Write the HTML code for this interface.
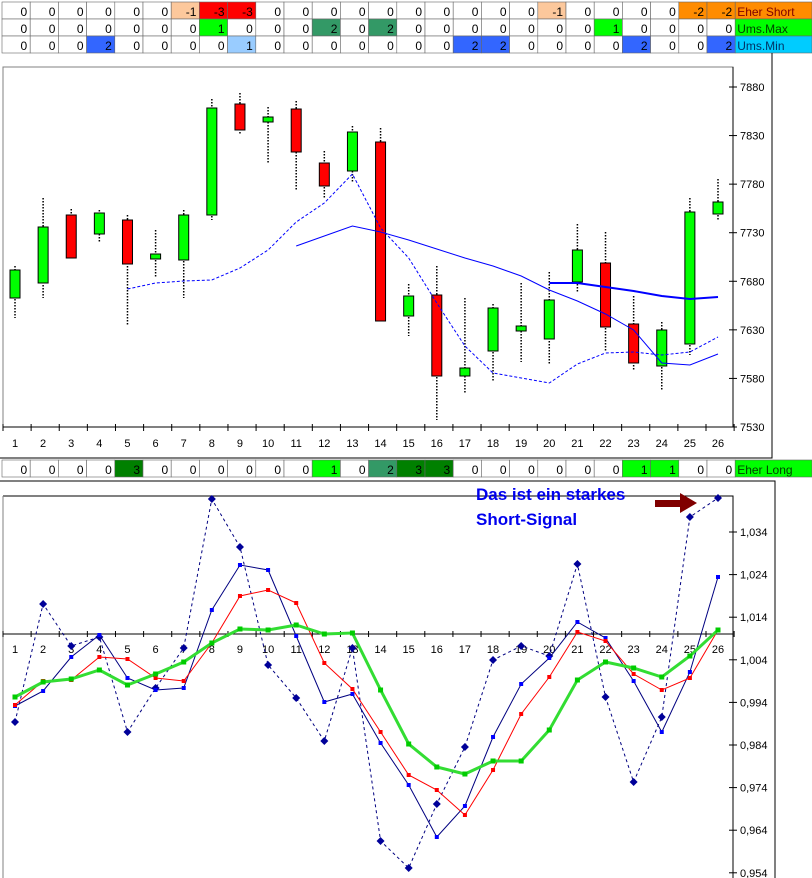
<!DOCTYPE html><html><head><meta charset="utf-8"><style>
body{margin:0;width:812px;height:878px;background:#fff;overflow:hidden;font-family:"Liberation Sans",Arial,sans-serif}
svg{position:absolute;left:0;top:0}
</style></head><body>
<svg id="s" width="812" height="878" xmlns="http://www.w3.org/2000/svg" font-family="Liberation Sans, Arial, sans-serif"></svg>
<script>
var o=[];function a(x){o.push(x)}
var CW=28.2,X0=2;
function row(y,h,vals,cols,label,lbg,lc){
 for(var i=0;i<26;i++){var x=X0+i*CW;a('<rect x="'+x+'" y="'+y+'" width="'+CW+'" height="'+h+'" fill="'+(cols[i]||'#fff')+'" stroke="#666" stroke-width="0.6"/>');
 a('<text x="'+(x+CW-3)+'" y="'+(y+h-3)+'" font-size="12" text-anchor="end" fill="#000">'+vals[i]+'</text>');}
 var lx=X0+26*CW;a('<rect x="'+lx+'" y="'+y+'" width="'+(812-lx)+'" height="'+h+'" fill="'+lbg+'" stroke="#666" stroke-width="0.6"/>');
 a('<text x="'+(lx+2)+'" y="'+(y+h-3)+'" font-size="12" fill="'+lc+'">'+label+'</text>');}
var P='#fcc89c',R='#ff0000',O='#ff8c00',G='#00ff00',SG='#339966',B='#3366ff',LB='#99ccff',DG='#008000';
var v1=[0,0,0,0,0,0,-1,-3,-3,0,0,0,0,0,0,0,0,0,0,-1,0,0,0,0,-2,-2],c1={6:P,7:R,8:R,19:P,24:O,25:O};
var v2=[0,0,0,0,0,0,0,1,0,0,0,2,0,2,0,0,0,0,0,0,0,1,0,0,0,0],c2={7:G,11:SG,13:SG,21:G};
var v3=[0,0,0,2,0,0,0,0,1,0,0,0,0,0,0,0,2,2,0,0,0,0,2,0,0,2],c3={3:B,8:LB,16:B,17:B,22:B,25:B};
row(2,17,v1,c1,'Eher Short',O,'#800000');row(19,17,v2,c2,'Ums.Max',G,'#004000');row(36,17,v3,c3,'Ums.Min','#00ccff','#003366');
var v4=[0,0,0,0,3,0,0,0,0,0,0,1,0,2,3,3,0,0,0,0,0,0,1,1,0,0],c4={4:DG,11:G,13:SG,14:DG,15:DG,22:G,23:G};
row(460,17,v4,c4,'Eher Long',G,'#004000');
function cx(i){return 15+28.12*(i-1)}
// chart1
a('<path d="M772 53V458H0" fill="none" stroke="#000"/>');
a('<path d="M3 67H733V427H3Z" fill="none" stroke="#808080"/>');a('<path d="M3 427H733M733 67V427" stroke="#000" fill="none"/>');
for(var k=0;k<=26;k++){var x=3+28.12*k;a('<path d="M'+x+' 424V431" stroke="#000"/>')}
for(var i=1;i<=26;i++)a('<text x="'+cx(i)+'" y="447" font-size="11" text-anchor="middle">'+i+'</text>');
for(var k=0;k<8;k++){var y=87+k*48.57;a('<path d="M729 '+y+'H737" stroke="#000"/><text x="740" y="'+(y+4)+'" font-size="11">'+(7880-50*k)+'</text>')}
var C=[['g',270,298,266,318],['g',227,283,198,298],['r',215,258,209,260],['g',213,234,210,242],['r',220,264,215,326],['g',254,259,230,277],['g',215,260,210,298],['g',108,215,99,220],['r',104,130,93,134],['g',117,122,107,163],['r',109,152,101,190],['r',163,186,151,199],['g',132,171,126,182],['r',142,321,128,321],['g',296,316,284,336],['r',295,376,266,420],['g',368,376,298,393],['g',308,351,304,382],['g',326,331,283,362],['g',300,339,272,365],['g',250,282,224,292],['r',263,327,232,352],['r',324,363,296,370],['g',330,366,322,390],['g',212,344,198,355],['g',202,214,179,221]];
C.forEach(function(c,j){var x=cx(j+1);a('<path d="M'+x+' '+c[3]+'V'+c[4]+'" stroke="#000" stroke-dasharray="1.5,1.5" stroke-width="1.5"/>');
a('<rect x="'+(x-5)+'" y="'+c[1]+'" width="10" height="'+(c[2]-c[1])+'" fill="'+(c[0]=='g'?'#00ff00':'#ff0000')+'" stroke="#000"/>')});
function line(st,ys,attr){var p='';ys.forEach(function(y,j){p+=(j?'L':'M')+cx(st+j).toFixed(1)+' '+y});a('<path d="'+p+'" fill="none" '+attr+'/>')}
line(5,[289,283,281,280,268,250,222,203,174,228,258,303,346,373,378,383,364,353,352,355,352,337],'stroke="#0000ff" stroke-dasharray="3,2"');
line(11,[246,236,226,232,240,249,258,266,276,290,301,314,330,363,365,354],'stroke="#0000ff"');
line(20,[283,283,287,291,296,299,297],'stroke="#0000ff" stroke-width="2"');
// chart2
a('<path d="M0 481H775V878" fill="none" stroke="#000"/>');
a('<path d="M3 496H733V878" fill="none" stroke="#000"/><path d="M3 496V878" stroke="#808080"/>');
a('<path d="M3 634H733" stroke="#000"/>');
for(var k=0;k<=26;k++){var x=3+28.12*k;a('<path d="M'+x+' 631V637" stroke="#000"/>')}
for(var i=1;i<=26;i++)a('<text x="'+cx(i)+'" y="653" font-size="11" text-anchor="middle">'+i+'</text>');
for(var k=0;k<9;k++){var y=532+k*42.6;a('<path d="M729 '+y+'H737" stroke="#000"/><text x="740" y="'+(y+4)+'" font-size="11">'+(1.034-0.01*k).toFixed(3).replace('.',',')+'</text>')}
function ser(ys,attr,mk){line(1,ys,attr);ys.forEach(function(y,j){var x=cx(j+1);a(mk(x,y))})}
ser([722,604,646,637,732,688,648,499,547,665,698,741,648,841,868,804,747,660,646,656,564,697,782,717,517,498],'stroke="#000080" stroke-dasharray="3,3"',function(x,y){return '<path d="M'+x+' '+(y-4)+'L'+(x+4)+' '+y+'L'+x+' '+(y+4)+'L'+(x-4)+' '+y+'Z" fill="#000099"/>'});
ser([706,691,657,635,678,690,688,610,565,570,636,702,694,743,785,837,806,737,684,658,622,638,681,732,672,577],'stroke="#000080"',function(x,y){return '<rect x="'+(x-2)+'" y="'+(y-2)+'" width="4" height="4" fill="#0000ff"/>'});
ser([705,681,680,657,659,678,681,643,596,590,603,663,689,732,775,790,815,770,714,677,632,641,674,690,678,630],'stroke="#ff0000"',function(x,y){return '<rect x="'+(x-2)+'" y="'+(y-2)+'" width="4" height="4" fill="#ff0000"/>'});
ser([697,682,679,670,685,674,662,643,629,630,625,634,633,690,744,767,774,761,761,730,680,662,668,677,656,630],'stroke="#33dd33" stroke-width="3"',function(x,y){return '<rect x="'+(x-2.5)+'" y="'+(y-2.5)+'" width="5" height="5" fill="#00cc00"/>'});
a('<text x="476" y="500" font-size="17" font-weight="bold" fill="#0000ee">Das ist ein starkes</text><text x="476" y="525" font-size="17" font-weight="bold" fill="#0000ee">Short-Signal</text>');
a('<path d="M655 500H680V493L697 503L680 513V507H655Z" fill="#800000"/>');
document.getElementById('s').innerHTML=o.join('');
</script></body></html>
